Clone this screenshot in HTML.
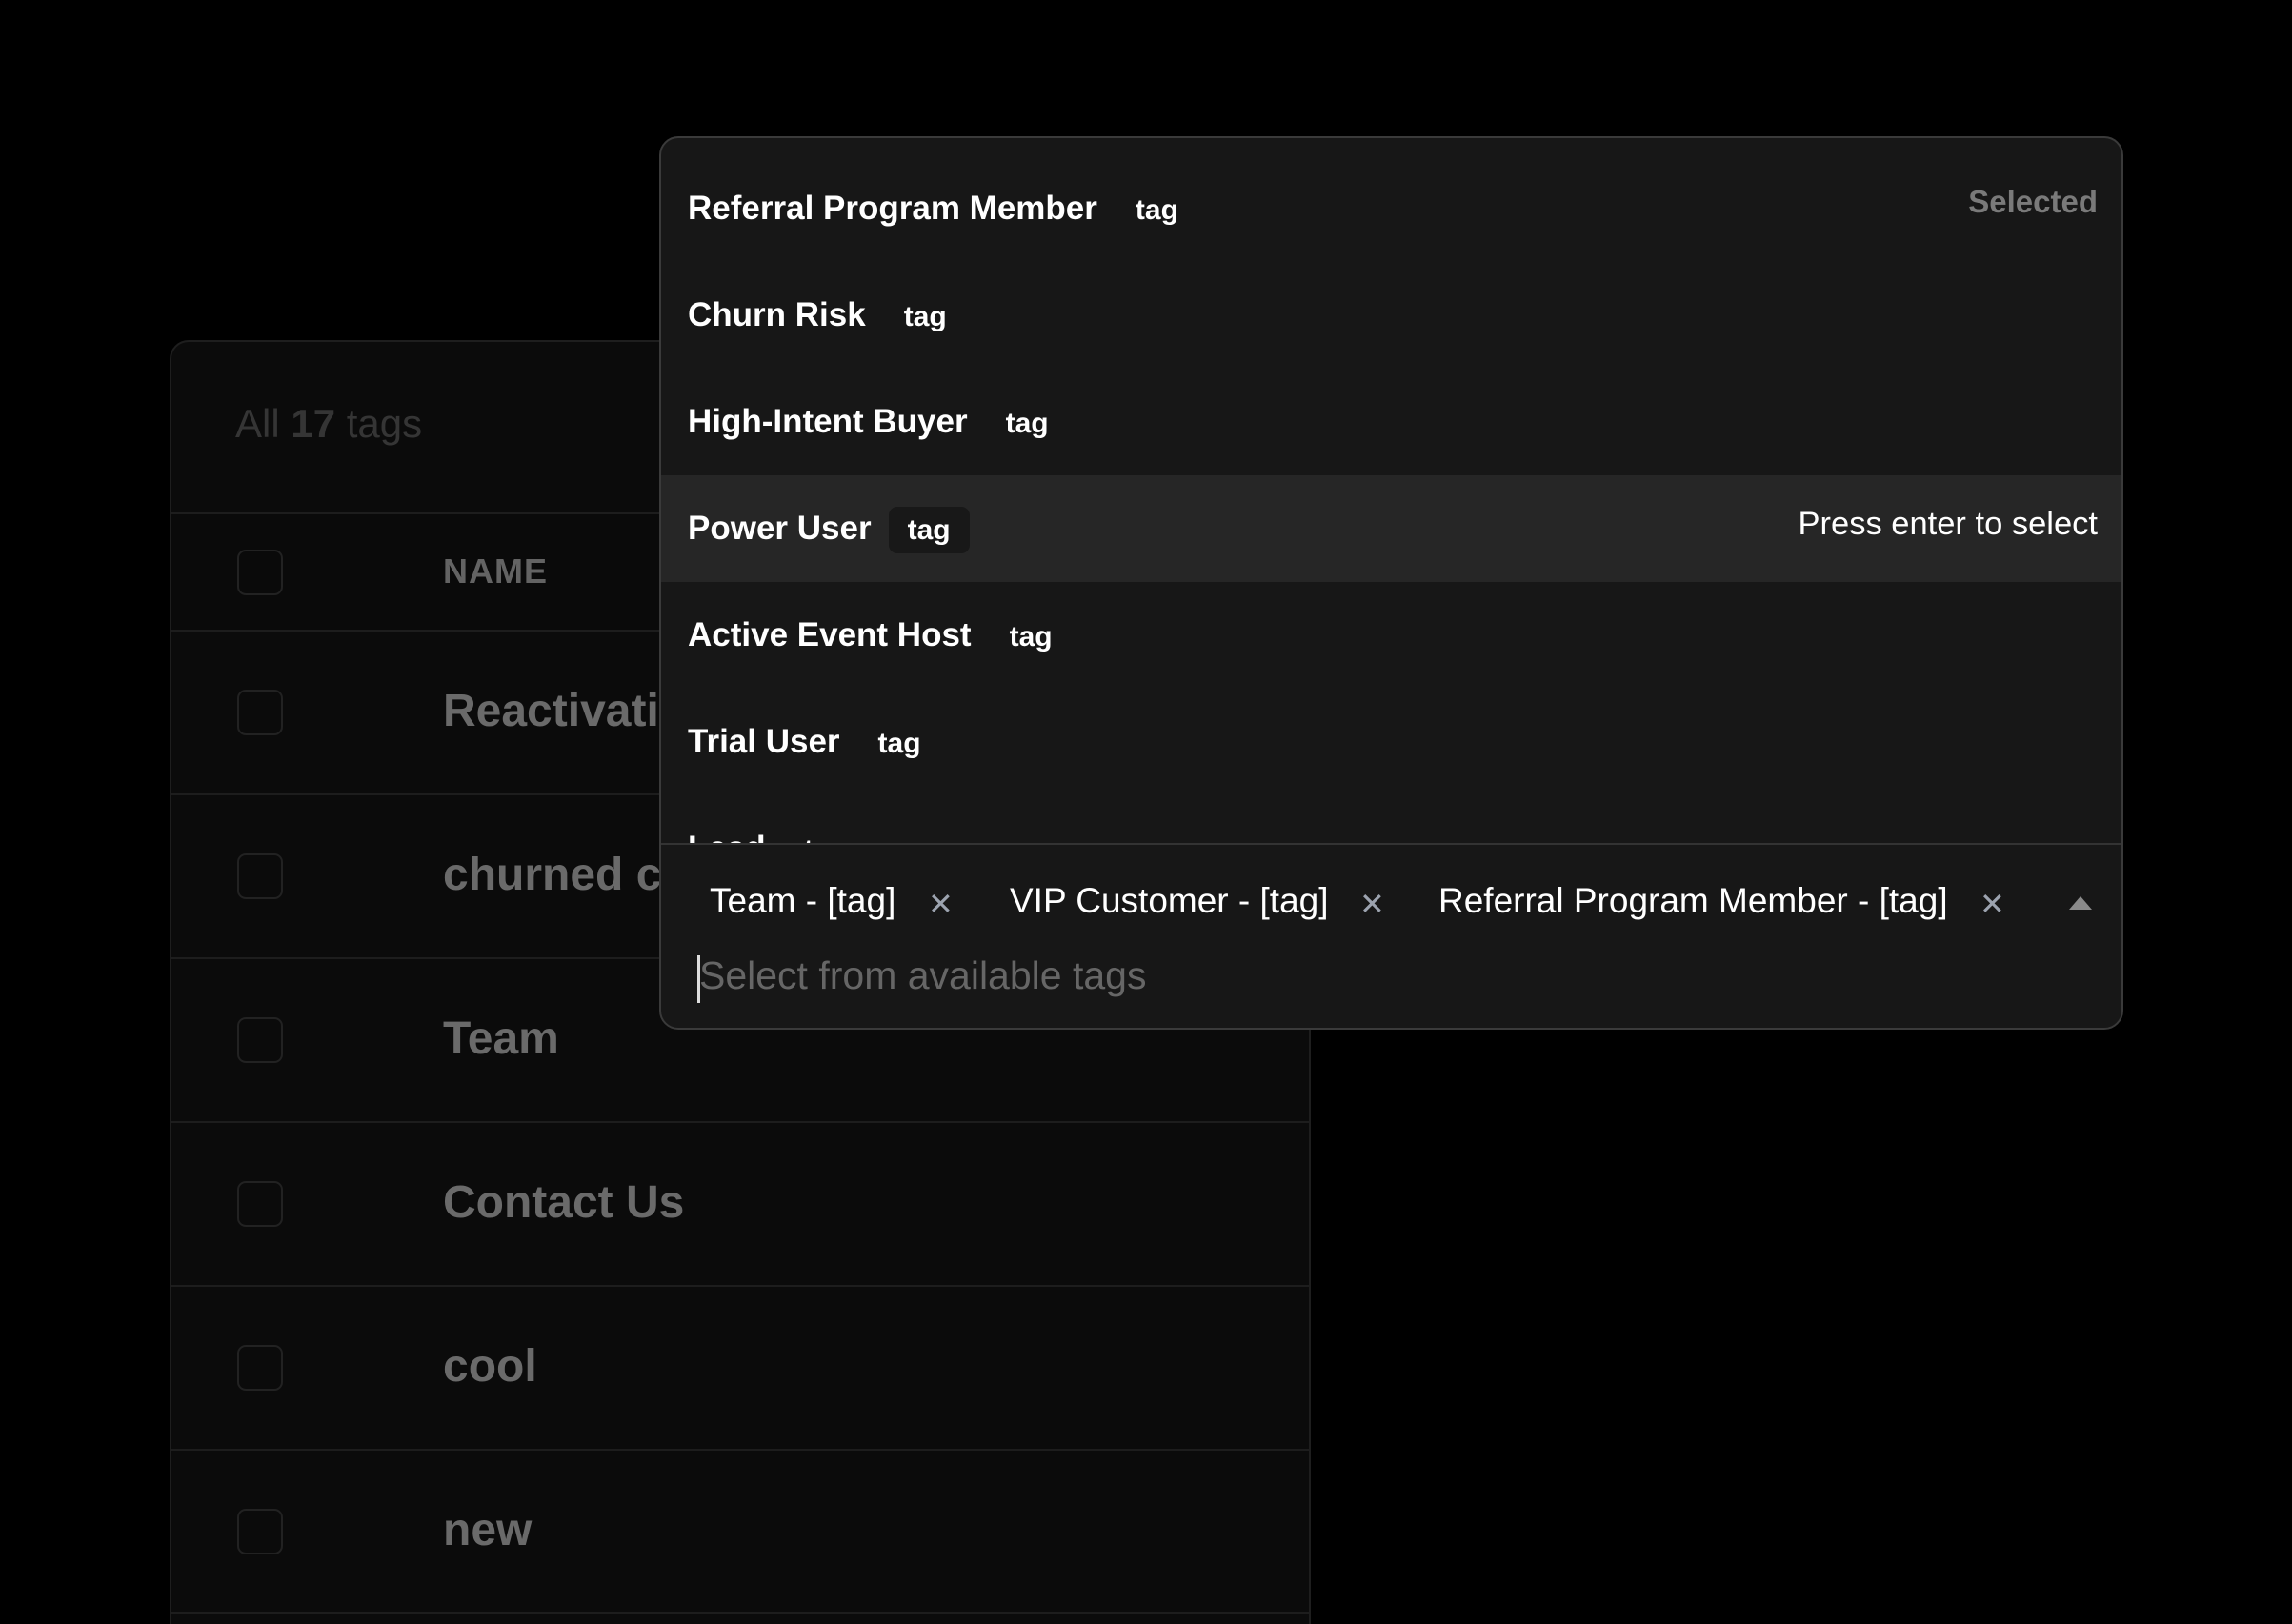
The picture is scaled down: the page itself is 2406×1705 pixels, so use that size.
<!DOCTYPE html>
<html><head><meta charset="utf-8"><style>
*{margin:0;padding:0;box-sizing:border-box}
html,body{width:2406px;height:1705px;overflow:hidden}
body{background:#000;position:relative;font-family:"Liberation Sans",Arial,sans-serif}
.abs{position:absolute;white-space:nowrap}
#table{position:absolute;left:178px;top:357px;width:1198px;height:1400px;background:#0b0b0b;border:2px solid #1e1e1e;border-radius:20px;overflow:hidden}
.sep{position:absolute;left:0;right:0;height:2px;background:#1d1d1d}
.cb{position:absolute;left:69px;width:48px;height:48px;border:2px solid #222;border-radius:9px}
.rt{position:absolute;left:285px;font-size:48px;font-weight:700;color:#6a6a6a;white-space:nowrap}
#dd{position:absolute;left:692px;top:143px;width:1537px;height:938px;background:#171717;border:2px solid #3a3a3a;border-radius:20px;overflow:hidden}
#list{position:absolute;left:0;top:0;right:0;height:742px;overflow:hidden;border-bottom:2px solid #333}
.row{position:absolute;left:0;right:0;height:112px}
.nm{position:absolute;left:28px;top:50%;transform:translateY(-50%);font-size:35px;font-weight:700;color:#fff;white-space:nowrap}
.nm span{font-size:30px;margin-left:40px;padding:8px 0}
.chip{position:absolute;top:780px;font-size:37px;color:#fff;white-space:nowrap}
.x{position:absolute;top:785px;font-size:32px;color:#9ca3af}
</style></head><body>
<div id="table">
  <div class="abs" style="left:67px;top:62px;font-size:42px;color:#353535">All <b>17</b> tags</div>
  <div class="sep" style="top:179px"></div>
  <div style="position:absolute;left:0;right:0;top:181px;height:123px;background:#0a0a0a"></div>
  <div class="cb" style="top:218px"></div>
  <div class="abs" style="left:285px;top:220px;font-size:36px;font-weight:700;color:#636363;letter-spacing:1px">NAME</div>
  <div class="sep" style="top:302px"></div>
  <div class="cb" style="top:365px"></div><div class="rt" style="top:360px">Reactivation</div>
  <div class="sep" style="top:474px"></div>
  <div class="cb" style="top:537px"></div><div class="rt" style="top:532px">churned customers</div>
  <div class="sep" style="top:646px"></div>
  <div class="cb" style="top:709px"></div><div class="rt" style="top:704px">Team</div>
  <div class="sep" style="top:818px"></div>
  <div class="cb" style="top:881px"></div><div class="rt" style="top:876px">Contact Us</div>
  <div class="sep" style="top:990px"></div>
  <div class="cb" style="top:1053px"></div><div class="rt" style="top:1048px">cool</div>
  <div class="sep" style="top:1162px"></div>
  <div class="cb" style="top:1225px"></div><div class="rt" style="top:1220px">new</div>
  <div class="sep" style="top:1333px"></div>
</div>
<div id="dd">
  <div id="list">
    <div class="row" style="top:18px"><div class="nm">Referral Program Member<span>tag</span></div>
      <div class="abs" style="right:25px;top:30px;font-size:33px;font-weight:700;color:#7a7a7a">Selected</div></div>
    <div class="row" style="top:130px"><div class="nm">Churn Risk<span>tag</span></div></div>
    <div class="row" style="top:242px"><div class="nm">High-Intent Buyer<span>tag</span></div></div>
    <div class="row" style="top:354px;background:#262626"><div class="nm">Power User<span style="margin-left:18px;background:#181818;border-radius:9px;padding:8px 20px">tag</span></div>
      <div class="abs" style="right:25px;top:32px;font-size:34.5px;color:#fff">Press enter to select</div></div>
    <div class="row" style="top:466px"><div class="nm">Active Event Host<span>tag</span></div></div>
    <div class="row" style="top:578px"><div class="nm">Trial User<span>tag</span></div></div>
    <div class="row" style="top:690px"><div class="nm">Lead<span>tag</span></div></div>
  </div>
  <div class="chip" style="left:51px">Team - [tag]</div><div class="x" style="left:280px">✕</div>
  <div class="chip" style="left:366px">VIP Customer - [tag]</div><div class="x" style="left:733px">✕</div>
  <div class="chip" style="left:816px">Referral Program Member - [tag]</div><div class="x" style="left:1384px">✕</div>
  <div class="abs" style="left:1478px;top:796px;width:0;height:0;border-left:12px solid transparent;border-right:12px solid transparent;border-bottom:14px solid #8a8a8a"></div>
  <div class="abs" style="left:38px;top:858px;width:3px;height:50px;background:#ddd"></div>
  <div class="abs" style="left:40px;top:856px;font-size:41px;color:#666">Select from available tags</div>
</div>
</body></html>
